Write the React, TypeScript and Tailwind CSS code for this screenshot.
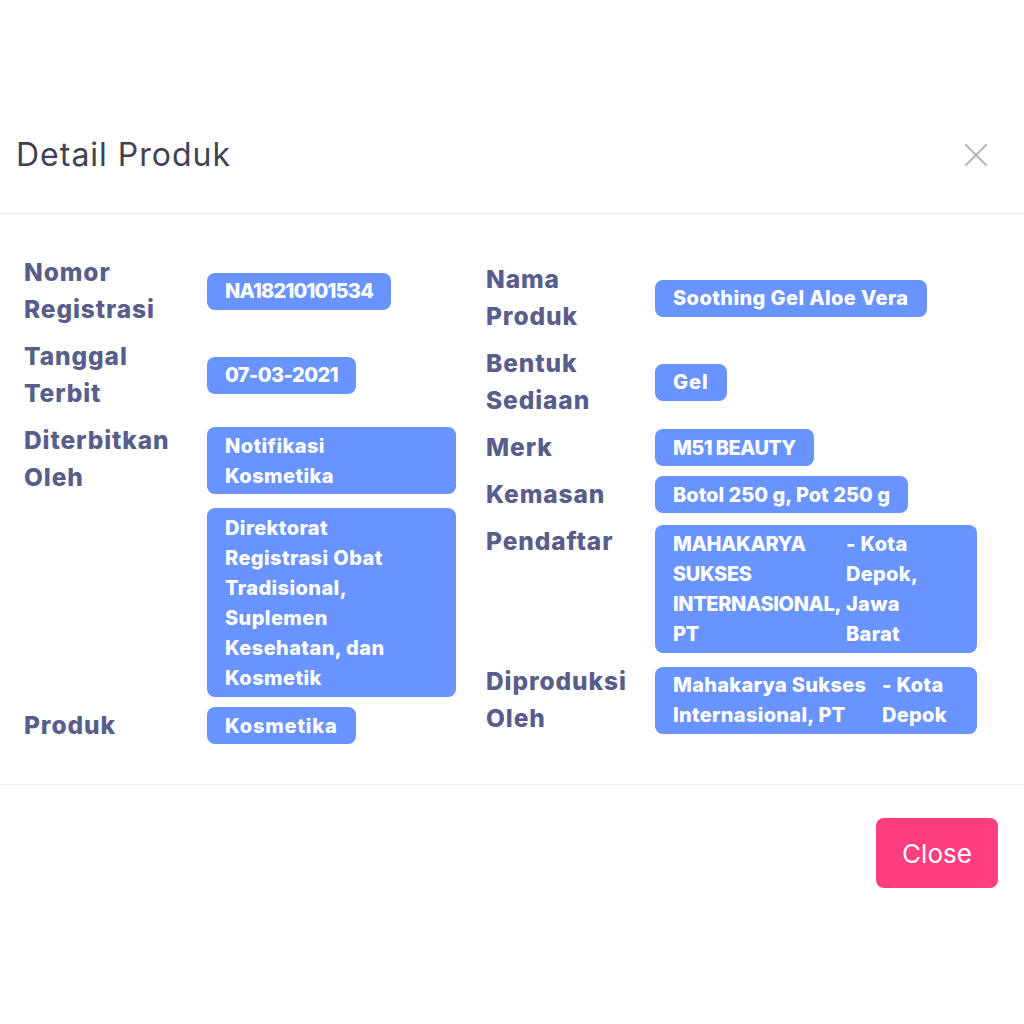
import React from 'react';

const pill = "rounded-lg bg-[#6993ff] px-[18px] text-[20px] leading-[30px] font-extrabold text-white";
const badge = `inline-block py-[3.5px] ${pill}`;
const label = "text-[24.5px] leading-[37px] font-extrabold text-[#595d8a] tracking-[0.9px]";

function Row({
  name,
  children,
  alignTop,
}: {
  name: React.ReactNode;
  children: React.ReactNode;
  alignTop?: boolean;
}) {
  return (
    <div className={`flex ${alignTop ? 'items-start' : 'items-center'}`}>
      {name}
      {children}
    </div>
  );
}

export default function App() {
  return (
    <div className="min-h-screen bg-white pt-[97px] font-['Inter',sans-serif]">
      {/* Header */}
      <div className="flex h-[117px] items-center justify-between border-b border-[#ebedf3] pl-4 pr-[36px]">
        <h1 className="text-[32px] font-normal text-[#3f4254] tracking-[1px]">Detail Produk</h1>
        <button className="flex h-6 w-6 items-center justify-center">
          <svg width="24" height="24" viewBox="0 0 24 24" fill="none" stroke="#b5b5c3" strokeWidth="2.2" strokeLinecap="round">
            <line x1="2" y1="2" x2="22" y2="22" />
            <line x1="22" y1="2" x2="2" y2="22" />
          </svg>
        </button>
      </div>

      {/* Body */}
      <div className="flex items-center border-b border-[#ebedf3] py-[40px] pl-6">
        {/* Left column */}
        <div className="flex w-[462px] flex-col gap-[10px]">
          <Row name={<div className={`${label} w-[183px] shrink-0`}>Nomor<br />Registrasi</div>}>
            <span className={`${badge} tracking-[-0.8px]`}>NA18210101534</span>
          </Row>
          <Row name={<div className={`${label} w-[183px] shrink-0`}>Tanggal<br />Terbit</div>}>
            <span className={`${badge} tracking-[-0.6px]`}>07-03-2021</span>
          </Row>
          <Row alignTop name={<div className={`${label} w-[183px] shrink-0`}>Diterbitkan<br />Oleh</div>}>
            <div className="mt-[5px] flex w-[249px] flex-col gap-[14px]">
              <div className={`${pill} py-[3.5px] tracking-[0.4px]`}>Notifikasi<br />Kosmetika</div>
              <div className={`${pill} py-[4.5px] tracking-[0.4px]`}>
                Direktorat<br />Registrasi Obat<br />Tradisional,<br />Suplemen<br />Kesehatan, dan<br />Kosmetik
              </div>
            </div>
          </Row>
          <Row name={<div className={`${label} w-[183px] shrink-0`}>Produk</div>}>
            <span className={`${badge} tracking-[0.8px]`}>Kosmetika</span>
          </Row>
        </div>

        {/* Right column */}
        <div className="flex flex-col gap-[10px]">
          <Row name={<div className={`${label} w-[169px] shrink-0`}>Nama<br />Produk</div>}>
            <span className={`${badge} tracking-[0.4px]`}>Soothing Gel Aloe Vera</span>
          </Row>
          <Row name={<div className={`${label} w-[169px] shrink-0`}>Bentuk<br />Sediaan</div>}>
            <span className={`${badge} tracking-[1px]`}>Gel</span>
          </Row>
          <Row name={<div className={`${label} w-[169px] shrink-0`}>Merk</div>}>
            <span className={`${badge} tracking-[-0.6px]`}>M51 BEAUTY</span>
          </Row>
          <Row name={<div className={`${label} w-[169px] shrink-0`}>Kemasan</div>}>
            <span className={badge}>Botol 250 g, Pot 250 g</span>
          </Row>
          <Row alignTop name={<div className={`${label} w-[169px] shrink-0`}>Pendaftar</div>}>
            <div className={`${pill} mt-[2px] flex w-[322px] py-[4px]`}>
              <span className="w-[173px] shrink-0 tracking-[-0.4px]">MAHAKARYA<br />SUKSES<br />INTERNASIONAL,<br />PT</span>
              <span className="tracking-[0.3px]">- Kota<br />Depok,<br />Jawa<br />Barat</span>
            </div>
          </Row>
          <Row name={<div className={`${label} w-[169px] shrink-0`}>Diproduksi<br />Oleh</div>}>
            <div className={`${pill} flex w-[322px] py-[3.5px] tracking-[0.3px]`}>
              <span className="w-[209px] shrink-0">Mahakarya Sukses<br />Internasional, PT</span>
              <span>- Kota<br />Depok</span>
            </div>
          </Row>
        </div>
      </div>

      {/* Footer */}
      <div className="flex justify-end pt-[33px] pr-[26px] pb-[33px]">
        <button className="h-[70px] w-[122px] rounded-lg bg-[#ff3d7f] text-[26px] font-normal text-white">
          Close
        </button>
      </div>
    </div>
  );
}
